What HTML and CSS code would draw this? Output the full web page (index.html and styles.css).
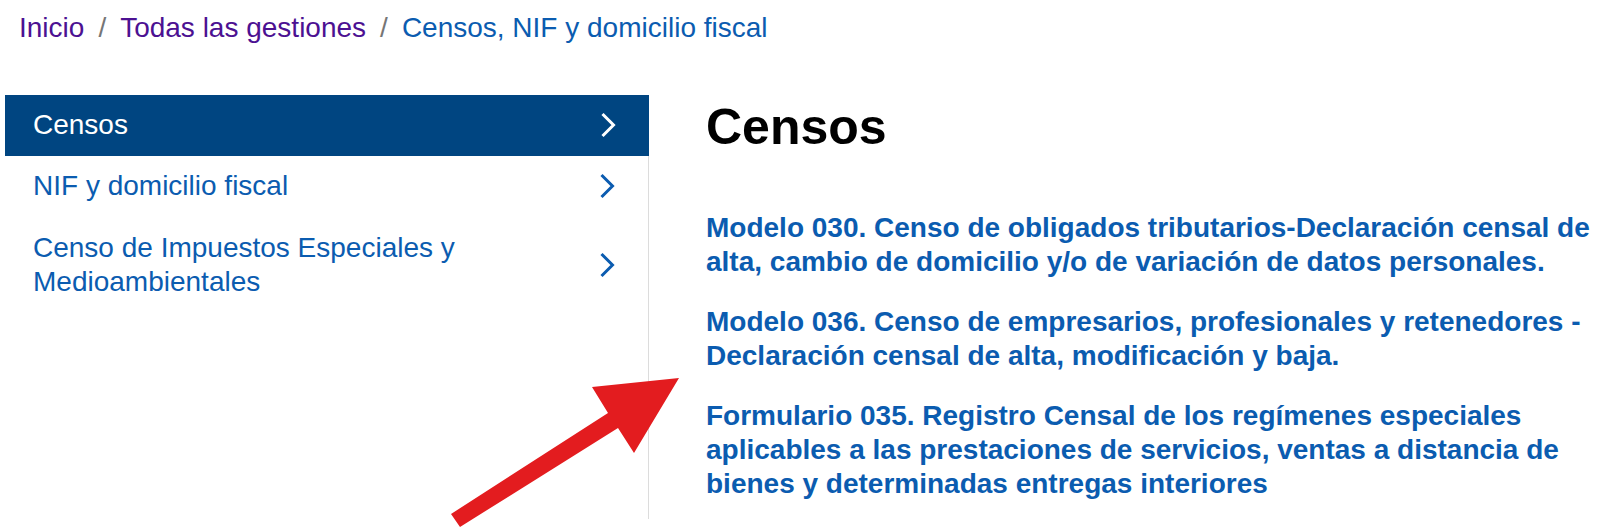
FILE: index.html
```html
<!DOCTYPE html>
<html lang="es">
<head>
<meta charset="utf-8">
<title>Censos</title>
<link rel="stylesheet" href="styles.css">
</head>
<body>
<nav class="breadcrumb">
  <a class="crumb visited" href="#">Inicio</a><span class="sep">/</span><a class="crumb visited" href="#">Todas las gestiones</a><span class="sep">/</span><span class="crumb current">Censos, NIF y domicilio fiscal</span>
</nav>
<div class="layout">
  <aside class="sidebar">
    <a class="side-item active" href="#">
      <span class="side-text">Censos</span>
      <svg class="chev" width="16" height="26" viewBox="0 0 16 26"><polyline points="2.5,2 13.5,13 2.5,24" fill="none" stroke="currentColor" stroke-width="3"/></svg>
    </a>
    <a class="side-item" href="#">
      <span class="side-text">NIF y domicilio fiscal</span>
      <svg class="chev" width="16" height="26" viewBox="0 0 16 26"><polyline points="2.5,2 13.5,13 2.5,24" fill="none" stroke="currentColor" stroke-width="3"/></svg>
    </a>
    <a class="side-item" href="#">
      <span class="side-text">Censo de Impuestos Especiales y<br>Medioambientales</span>
      <svg class="chev" width="16" height="26" viewBox="0 0 16 26"><polyline points="2.5,2 13.5,13 2.5,24" fill="none" stroke="currentColor" stroke-width="3"/></svg>
    </a>
  </aside>
  <main class="main">
    <h1 class="title">Censos</h1>
    <ul class="links">
      <li><a href="#">Modelo 030. Censo de obligados tributarios-Declaración censal de alta, cambio de domicilio y/o de variación de datos personales.</a></li>
      <li><a href="#">Modelo 036. Censo de empresarios, profesionales y retenedores - Declaración censal de alta, modificación y baja.</a></li>
      <li><a href="#">Formulario 035. Registro Censal de los regímenes especiales aplicables a las prestaciones de servicios, ventas a distancia de bienes y determinadas entregas interiores</a></li>
    </ul>
  </main>
</div>
<svg class="arrow" width="1610" height="528" viewBox="0 0 1610 528">
  <polygon points="451,514 608,413 592,387 679,378 634,453 618,428 460,527" fill="#e31c1f"/>
</svg>
</body>
</html>
```
FILE: styles.css
```css
* { box-sizing: border-box; }
html, body {
  margin: 0;
  padding: 0;
  background: #ffffff;
  font-family: "Liberation Sans", Arial, sans-serif;
}
body {
  position: relative;
  width: 1610px;
  height: 528px;
  overflow: hidden;
}
a { text-decoration: none; }

.breadcrumb {
  padding: 10px 0 0 19px;
  font-size: 28px;
  line-height: 35px;
  height: 95px;
  white-space: nowrap;
}
.crumb.visited { color: #4c1192; }
.crumb.current { color: #0b5cb0; }
.sep {
  color: #767676;
  margin: 0 14px;
}

.layout {
  display: flex;
  align-items: flex-start;
  height: 433px;
}

.sidebar {
  margin-left: 5px;
  width: 644px;
  border-right: 1px solid #dcdcdc;
  height: 424px;
  display: flex;
  flex-direction: column;
}
.side-item {
  display: flex;
  align-items: center;
  justify-content: space-between;
  padding: 13px 33px 14px 28px;
  font-size: 28px;
  line-height: 34px;
  color: #0b5cb0;
}
.side-item.active {
  background: #004581;
  color: #ffffff;
  margin-right: -1px;
}
.side-item:nth-child(3) { padding-top: 14px; }
.chev { flex: none; display: block; }

.main {
  flex: 1;
  padding: 0 6px 0 57px;
}
.title {
  margin: 2px 0 0 0;
  font-size: 50px;
  line-height: 60px;
  font-weight: bold;
  color: #000000;
}
.links {
  list-style: none;
  margin: 54px 0 0 0;
  padding: 0;
  display: flex;
  flex-direction: column;
  gap: 25px;
}
.links a {
  font-size: 28px;
  line-height: 34.4px;
  font-weight: bold;
  color: #0b5cb0;
}

.arrow {
  position: absolute;
  left: 0;
  top: 0;
  pointer-events: none;
}
```
